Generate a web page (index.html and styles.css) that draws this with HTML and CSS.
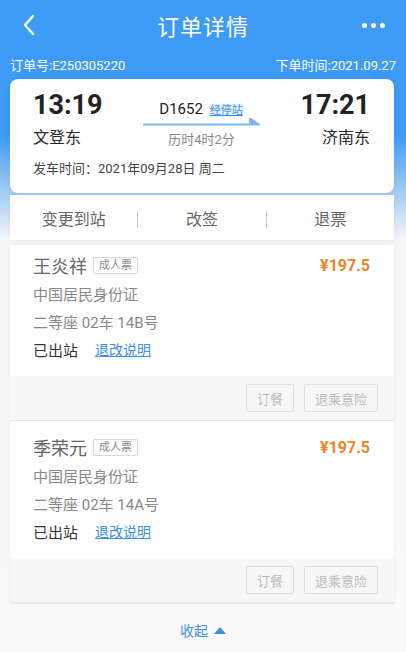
FILE: index.html
```html
<!DOCTYPE html>
<html lang="zh-CN">
<head>
<meta charset="utf-8">
<link rel="stylesheet" href="styles.css">
</head>
<body>
<div class="page">
  <header class="nav">
    <span class="back"><svg width="14" height="22" viewBox="0 0 14 22"><path d="M11 2 L3 11 L11 20" fill="none" stroke="#fff" stroke-width="2.4" stroke-linecap="round" stroke-linejoin="round"/></svg></span>
    <h1 class="title">订单详情</h1>
    <span class="more"><i></i><i></i><i></i></span>
  </header>
  <div class="order-info">
    <span>订单号:E250305220</span>
    <span>下单时间:2021.09.27</span>
  </div>

  <section class="trip-card">
    <div class="trip-main">
      <div class="station">
        <div class="time">13:19</div>
        <div class="name">文登东</div>
      </div>
      <div class="train">
        <div class="train-no">D1652 <span class="stops">经停站</span></div>
        <svg class="arrow" width="117" height="8" viewBox="0 0 117 8"><path d="M0 6.5 H116 L107 0.5 V6.5" fill="#7db7ec" stroke="#7db7ec" stroke-width="2"/></svg>
        <div class="duration">历时4时2分</div>
      </div>
      <div class="station right">
        <div class="time">17:21</div>
        <div class="name">济南东</div>
      </div>
    </div>
    <div class="depart">发车时间：2021年09月28日 周二</div>
  </section>

  <nav class="actions">
    <span>变更到站</span>
    <i class="sep"></i>
    <span>改签</span>
    <i class="sep"></i>
    <span>退票</span>
  </nav>

  <section class="passengers">
    <article class="passenger">
      <div class="p-body">
        <div class="p-row">
          <span class="p-name">王炎祥</span><span class="badge">成人票</span>
          <span class="price">¥197.5</span>
        </div>
        <div class="p-row muted">中国居民身份证</div>
        <div class="p-row muted">二等座 02车 14B号</div>
        <div class="p-row"><span class="status">已出站</span><a class="rule">退改说明</a></div>
      </div>
      <div class="p-foot">
        <span class="btn">订餐</span>
        <span class="btn">退乘意险</span>
      </div>
    </article>
    <article class="passenger second">
      <div class="p-body">
        <div class="p-row">
          <span class="p-name">季荣元</span><span class="badge">成人票</span>
          <span class="price">¥197.5</span>
        </div>
        <div class="p-row muted">中国居民身份证</div>
        <div class="p-row muted">二等座 02车 14A号</div>
        <div class="p-row"><span class="status">已出站</span><a class="rule">退改说明</a></div>
      </div>
      <div class="p-foot">
        <span class="btn">订餐</span>
        <span class="btn">退乘意险</span>
      </div>
    </article>
  </section>

  <div class="collapse">收起 <svg width="12" height="7" viewBox="0 0 12 7"><path d="M6 0 L12 7 H0 Z" fill="#3a8ee6"/></svg></div>
</div>
</body>
</html>
```

FILE: styles.css
```css
* { box-sizing: border-box; }
html, body { margin: 0; padding: 0; }
body {
  font-family: "Roboto", "Noto Sans CJK SC", sans-serif;
  width: 406px;
  height: 652px;
  overflow: hidden;
  background: #fafafa;
}
.page {
  min-height: 652px;
  background: linear-gradient(to bottom, #3d9af5 0, #3d9af5 135px, #f6f6f6 240px, #fafafa 100%);
}
.nav {
  height: 50px;
  display: flex;
  align-items: center;
  justify-content: space-between;
  padding: 0 20px 0 20px;
  color: #fff;
}
.back { width: 40px; display: flex; align-items: center; padding-left: 2px; }
.title {
  margin: 0;
  font-size: 22px;
  font-weight: 400;
  letter-spacing: 1px;
}
.more { width: 40px; display: flex; justify-content: flex-end; gap: 4px; padding-right: 1px; }
.more i { width: 5px; height: 5px; border-radius: 50%; background: #fff; display: block; }
.order-info {
  height: 29px;
  display: flex;
  justify-content: space-between;
  align-items: center;
  padding: 0 10px 0 10px;
  color: #fff;
  font-size: 13px;
}
.trip-card {
  margin: 0 12px 0 10px;
  background: #fff;
  border-radius: 8px;
  padding: 10px 24px 12px 23px;
  height: 114px;
  box-shadow: 0 2px 8px rgba(0,0,0,0.05);
}
.trip-main { display: flex; justify-content: space-between; align-items: flex-start; }
.station .time { font-size: 27px; font-weight: 700; color: #222; line-height: 32px; }
.station .name { font-size: 16px; color: #2a2a2a; line-height: 22px; margin-top: 6px; }
.station.right { text-align: right; }
.train { display: flex; flex-direction: column; align-items: center; padding-top: 10px; }
.train-no { font-size: 15px; color: #222; line-height: 20px; }
.stops {
  font-size: 11px;
  color: #3a8ee6;
  background: #e6f1fc;
  text-decoration: underline;
  padding: 0 1px;
  margin-left: 2px;
}
.arrow { display: block; margin-top: -3px; }
.duration { font-size: 13px; color: #888; line-height: 18px; margin-top: 5px; }
.depart { font-size: 13px; color: #444; margin-top: 11px; line-height: 18px; }
.actions {
  margin: 2px 12px 0 10px;
  height: 45px;
  background: #fff;
  display: grid;
  grid-template-columns: 1fr 1px 1fr 1px 1fr;
  align-items: center;
  font-size: 16px;
  color: #666;
  text-align: center;
  box-shadow: 0 3px 6px rgba(0,0,0,0.04);
}
.actions span { display: block; }
.actions .sep { display: block; height: 17px; width: 1px; background: #ccc; margin-top: 3px; }
.passengers {
  margin: 5px 12px 0 10px;
  background: #fff;
  box-shadow: 0 1px 3px rgba(0,0,0,0.08);
}
.p-body { padding: 6px 24px 13px 23px; }
.second .p-body { padding-top: 12px; }
.p-row {
  height: 28px;
  display: flex;
  align-items: center;
  font-size: 15px;
  color: #333;
}
.p-row.muted { color: #888; }
.p-name { font-size: 18px; color: #666; }
.badge {
  font-size: 11px;
  color: #888;
  border: 1px solid #d8d8d8;
  border-radius: 2px;
  padding: 0 5px;
  line-height: 15px;
  margin-left: 6px;
}
.price { margin-left: auto; color: #ee8429; font-weight: 700; font-size: 16px; }
.status { color: #333; }
.rule { color: #3a8ee6; text-decoration: underline; margin-left: 17px; font-size: 14px; }
.p-foot {
  height: 45px;
  background: #f7f7f7;
  border-bottom: 1px solid #e5e5e5;
  display: flex;
  justify-content: flex-end;
  align-items: center;
  gap: 10px;
  padding-right: 16px;
}
.btn {
  height: 28px;
  border: 1px solid #e0e0e0;
  border-radius: 2px;
  color: #bbb;
  font-size: 13px;
  display: flex;
  align-items: center;
  padding: 0 10px;
}
.collapse {
  height: 50px;
  display: flex;
  justify-content: center;
  align-items: center;
  gap: 6px;
  color: #3a8ee6;
  font-size: 14px;
  padding-top: 4px;
}
```
